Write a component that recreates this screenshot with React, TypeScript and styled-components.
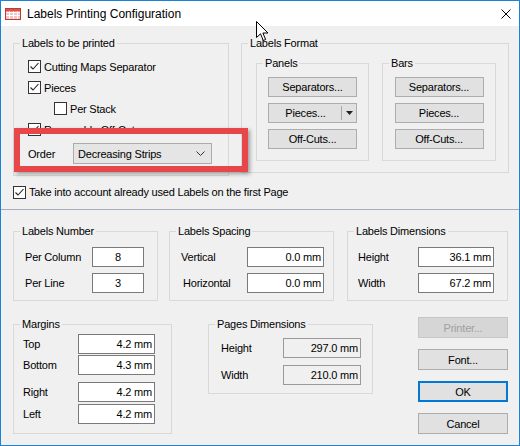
import styled, { createGlobalStyle } from "styled-components";

const GlobalStyle = createGlobalStyle`
  html, body {
    margin: 0;
    padding: 0;
    background: #ffffff;
  }
  body {
    font-family: "Liberation Sans", Arial, sans-serif;
    font-size: 11px;
    letter-spacing: -0.2px;
    color: #000;
  }
  * {
    box-sizing: border-box;
  }
`;

const Window = styled.div`
  position: relative;
  width: 520px;
  height: 446px;
  border: 1px solid #1883d7;
  background: #f0f0f0;
  display: flex;
  flex-direction: column;
  overflow: hidden;
`;

const TitleBar = styled.div`
  height: 25px;
  flex-shrink: 0;
  background: #ffffff;
  display: flex;
  align-items: center;
  padding-left: 4px;
`;

const TitleText = styled.span`
  margin-left: 6px;
  font-size: 12px;
  letter-spacing: 0;
`;

const CloseBox = styled.div`
  margin-left: auto;
  width: 26px;
  height: 25px;
  display: flex;
  align-items: center;
  justify-content: center;
`;

const TopSection = styled.div`
  display: flex;
  gap: 12px;
  padding: 11px 0 0 12px;
`;

const GroupBox = styled.fieldset<{ $w: number; $h: number; $ml?: number }>`
  margin: 0 0 0 ${({ $ml }) => $ml ?? 0}px;
  padding: 0;
  min-width: 0;
  width: ${({ $w }) => $w}px;
  height: ${({ $h }) => $h}px;
  border: 1px solid #d9d9d9;
  flex-shrink: 0;
`;

const Legend = styled.legend`
  margin-left: 6px;
  padding: 0 2px;
  line-height: 13px;
`;

const PrintedBody = styled.div`
  padding: 6px 0 0 14px;
  display: flex;
  flex-direction: column;
`;

const CheckRow = styled.div<{ $indent?: number; $h?: number }>`
  display: flex;
  align-items: center;
  gap: 3px;
  height: ${({ $h }) => $h ?? 21}px;
  padding-left: ${({ $indent }) => $indent ?? 0}px;
`;

const Box = styled.span`
  width: 13px;
  height: 13px;
  border: 1px solid #333333;
  background: #ffffff;
  display: flex;
  align-items: center;
  justify-content: center;
  flex-shrink: 0;
`;

const OrderRow = styled.div`
  margin-top: 3px;
  display: flex;
  align-items: center;
`;

const OrderLabel = styled.span`
  width: 45px;
`;

const Combo = styled.div`
  width: 139px;
  height: 21px;
  border: 1px solid #acacac;
  background: #e5e5e5;
  display: flex;
  align-items: center;
  justify-content: space-between;
  padding: 0 6px 0 4px;
`;

const FormatBody = styled.div`
  display: flex;
  gap: 13px;
  padding: 7px 0 0 14px;
`;

const ButtonStack = styled.div`
  display: flex;
  flex-direction: column;
  align-items: center;
  gap: 6px;
  padding-top: 7px;
`;

const PushButton = styled.button<{ $w: number; $h?: number; $default?: boolean }>`
  width: ${({ $w }) => $w}px;
  height: ${({ $h }) => $h ?? 20}px;
  margin: 0;
  padding: 0;
  font-family: inherit;
  font-size: 11px;
  letter-spacing: -0.2px;
  color: #000;
  background: #e1e1e1;
  border: ${({ $default }) => ($default ? "2px solid #0078d7" : "1px solid #adadad")};
  display: flex;
  align-items: center;
  justify-content: center;

  &:disabled {
    background: #d6d6d6;
    border-color: #c6c6c6;
    color: #a0a0a0;
  }
`;

const SplitMain = styled.span`
  flex: 1;
  text-align: center;
  padding-left: 1px;
`;

const SplitSep = styled.span`
  width: 1px;
  height: 14px;
  background: #a8a8a8;
`;

const SplitArrow = styled.span`
  width: 14px;
  display: flex;
  align-items: center;
  justify-content: center;
`;

const WideCheckRow = styled(CheckRow)`
  margin: 8px 0 0 12px;
`;

const Divider = styled.div`
  margin-top: 9px;
  height: 1px;
  background: #a4adb8;
`;

const BottomSection = styled.div`
  display: flex;
  flex-direction: column;
  gap: 17px;
  padding: 15px 0 0 12px;
`;

const GroupRow = styled.div<{ $gap: number }>`
  display: flex;
  align-items: flex-start;
  gap: ${({ $gap }) => $gap}px;
`;

const FieldList = styled.div<{ $pl: number; $pt: number; $gap: number }>`
  display: flex;
  flex-direction: column;
  gap: ${({ $gap }) => $gap}px;
  padding: ${({ $pt }) => $pt}px 0 0 ${({ $pl }) => $pl}px;
`;

const FieldRow = styled.div<{ $mt?: number }>`
  display: flex;
  align-items: center;
  height: 20px;
  margin-top: ${({ $mt }) => $mt ?? 0}px;
`;

const FieldLabel = styled.span<{ $w: number; $indent?: number }>`
  width: ${({ $w }) => $w}px;
  padding-left: ${({ $indent }) => $indent ?? 0}px;
  flex-shrink: 0;
`;

const TextBox = styled.input<{ $w: number; $center?: boolean }>`
  width: ${({ $w }) => $w}px;
  height: 20px;
  margin: 0;
  padding: 0 2px 0 2px;
  font-family: inherit;
  font-size: 11px;
  letter-spacing: -0.2px;
  color: #000;
  background: ${({ readOnly }) => (readOnly ? "#f0f0f0" : "#ffffff")};
  border: 1px solid ${({ readOnly }) => (readOnly ? "#9a9a9a" : "#7a7a7a")};
  text-align: ${({ $center }) => ($center ? "center" : "right")};
  outline: none;
`;

const SideButtons = styled.div`
  margin: -1px 0 0 9px;
  display: flex;
  flex-direction: column;
  gap: 11px;
`;

const Highlight = styled.div`
  position: absolute;
  left: 13px;
  top: 127px;
  width: 234px;
  height: 44px;
  border: 6px solid #e8474a;
  box-shadow: 2px 2px 4px rgba(0, 0, 0, 0.35);
  pointer-events: none;
`;

const Cursor = styled.svg`
  position: absolute;
  left: 255px;
  top: 20px;
`;

const AppIcon = () => (
  <svg width="16" height="12" viewBox="0 0 16 12">
    <rect x="0.5" y="0.5" width="15" height="11" fill="#f3c4c4" stroke="#c0392b" />
    <rect x="1" y="1" width="14" height="2.5" fill="#d9534f" />
    {[4, 7].map((y) => (
      <line key={y} x1="1" y1={y + 0.5} x2="15" y2={y + 0.5} stroke="#ffffff" />
    ))}
    {[4, 8, 12].map((x) => (
      <line key={x} x1={x + 0.5} y1="3.5" x2={x + 0.5} y2="11" stroke="#ffffff" />
    ))}
  </svg>
);

const CheckBox = ({ checked }: { checked?: boolean }) => (
  <Box>
    {checked && (
      <svg width="11" height="11" viewBox="0 0 11 11">
        <polyline points="1.5,5.5 4,8 9.5,2" fill="none" stroke="#222" strokeWidth="1.1" />
      </svg>
    )}
  </Box>
);

const Field = ({
  label,
  value,
  lw,
  iw,
  center,
  readOnly,
  mt,
  indent,
}: {
  label: string;
  value: string;
  lw: number;
  iw: number;
  center?: boolean;
  readOnly?: boolean;
  mt?: number;
  indent?: number;
}) => (
  <FieldRow $mt={mt}>
    <FieldLabel $w={lw} $indent={indent}>
      {label}
    </FieldLabel>
    <TextBox $w={iw} $center={center} readOnly={readOnly} value={value} onChange={() => {}} />
  </FieldRow>
);

const FormatButtons = ({ split }: { split?: boolean }) => (
  <ButtonStack>
    <PushButton $w={89}>Separators...</PushButton>
    <PushButton $w={89}>
      {split ? (
        <>
          <SplitMain>Pieces...</SplitMain>
          <SplitSep />
          <SplitArrow>
            <svg width="7" height="4" viewBox="0 0 7 4">
              <polygon points="0,0 7,0 3.5,4" fill="#222" />
            </svg>
          </SplitArrow>
        </>
      ) : (
        "Pieces..."
      )}
    </PushButton>
    <PushButton $w={89}>Off-Cuts...</PushButton>
  </ButtonStack>
);

export default function App() {
  return (
    <>
      <GlobalStyle />
      <Window>
        <TitleBar>
          <AppIcon />
          <TitleText>Labels Printing Configuration</TitleText>
          <CloseBox>
            <svg width="10" height="10" viewBox="0 0 10 10">
              <path d="M0.5 0.5 L9.5 9.5 M9.5 0.5 L0.5 9.5" stroke="#000" strokeWidth="1" />
            </svg>
          </CloseBox>
        </TitleBar>

        <TopSection>
          <GroupBox $w={216} $h={139}>
            <Legend>Labels to be printed</Legend>
            <PrintedBody>
              <CheckRow>
                <CheckBox checked />
                Cutting Maps Separator
              </CheckRow>
              <CheckRow>
                <CheckBox checked />
                Pieces
              </CheckRow>
              <CheckRow $indent={26}>
                <CheckBox />
                Per Stack
              </CheckRow>
              <CheckRow>
                <CheckBox checked />
                Removable Off-Cuts
              </CheckRow>
              <OrderRow>
                <OrderLabel>Order</OrderLabel>
                <Combo>
                  <span>Decreasing Strips</span>
                  <svg width="9" height="5" viewBox="0 0 9 5">
                    <polyline points="0.5,0.5 4.5,4.5 8.5,0.5" fill="none" stroke="#333" strokeWidth="1" />
                  </svg>
                </Combo>
              </OrderRow>
            </PrintedBody>
          </GroupBox>

          <GroupBox $w={268} $h={136}>
            <Legend>Labels Format</Legend>
            <FormatBody>
              <GroupBox $w={113} $h={104}>
                <Legend>Panels</Legend>
                <FormatButtons split />
              </GroupBox>
              <GroupBox $w={114} $h={104}>
                <Legend>Bars</Legend>
                <FormatButtons />
              </GroupBox>
            </FormatBody>
          </GroupBox>
        </TopSection>

        <WideCheckRow $h={16}>
          <CheckBox checked />
          Take into account already used Labels on the first Page
        </WideCheckRow>

        <Divider />

        <BottomSection>
          <GroupRow $gap={11}>
            <GroupBox $w={145} $h={76}>
              <Legend>Labels Number</Legend>
              <FieldList $pl={11} $pt={9} $gap={6}>
                <Field label="Per Column" value="8" lw={67} iw={52} center />
                <Field label="Per Line" value="3" lw={67} iw={52} center />
              </FieldList>
            </GroupBox>
            <GroupBox $w={165} $h={76}>
              <Legend>Labels Spacing</Legend>
              <FieldList $pl={11} $pt={9} $gap={6}>
                <Field label="Vertical" value="0.0 mm" lw={66} iw={77} />
                <Field label="Horizontal" value="0.0 mm" lw={66} iw={77} indent={2} />
              </FieldList>
            </GroupBox>
            <GroupBox $w={161} $h={76} $ml={2}>
              <Legend>Labels Dimensions</Legend>
              <FieldList $pl={10} $pt={9} $gap={6}>
                <Field label="Height" value="36.1 mm" lw={60} iw={76} />
                <Field label="Width" value="67.2 mm" lw={60} iw={76} />
              </FieldList>
            </GroupBox>
          </GroupRow>

          <GroupRow $gap={36}>
            <GroupBox $w={159} $h={116}>
              <Legend>Margins</Legend>
              <FieldList $pl={9} $pt={3} $gap={0}>
                <Field label="Top" value="4.2 mm" lw={55} iw={77} />
                <Field label="Bottom" value="4.3 mm" lw={55} iw={77} mt={1} />
                <Field label="Right" value="4.2 mm" lw={55} iw={77} mt={7} />
                <Field label="Left" value="4.2 mm" lw={55} iw={77} mt={2} />
              </FieldList>
            </GroupBox>
            <GroupBox $w={165} $h={76}>
              <Legend>Pages Dimensions</Legend>
              <FieldList $pl={12} $pt={7} $gap={7}>
                <Field label="Height" value="297.0 mm" lw={62} iw={78} readOnly />
                <Field label="Width" value="210.0 mm" lw={62} iw={78} readOnly />
              </FieldList>
            </GroupBox>
            <SideButtons>
              <PushButton $w={90} $h={21} disabled>
                Printer...
              </PushButton>
              <PushButton $w={90} $h={21}>
                Font...
              </PushButton>
              <PushButton $w={90} $h={21} $default>
                OK
              </PushButton>
              <PushButton $w={90} $h={21}>
                Cancel
              </PushButton>
            </SideButtons>
          </GroupRow>
        </BottomSection>

        <Highlight />
        <Cursor width="13" height="21" viewBox="0 0 13 21">
          <path
            d="M0.5 0.5 L0.5 16.5 L4.5 12.8 L7.3 19.5 L9.6 18.5 L6.9 12 L12 12 Z"
            fill="#ffffff"
            stroke="#000000"
            strokeWidth="1"
            strokeLinejoin="round"
          />
        </Cursor>
      </Window>
    </>
  );
}
